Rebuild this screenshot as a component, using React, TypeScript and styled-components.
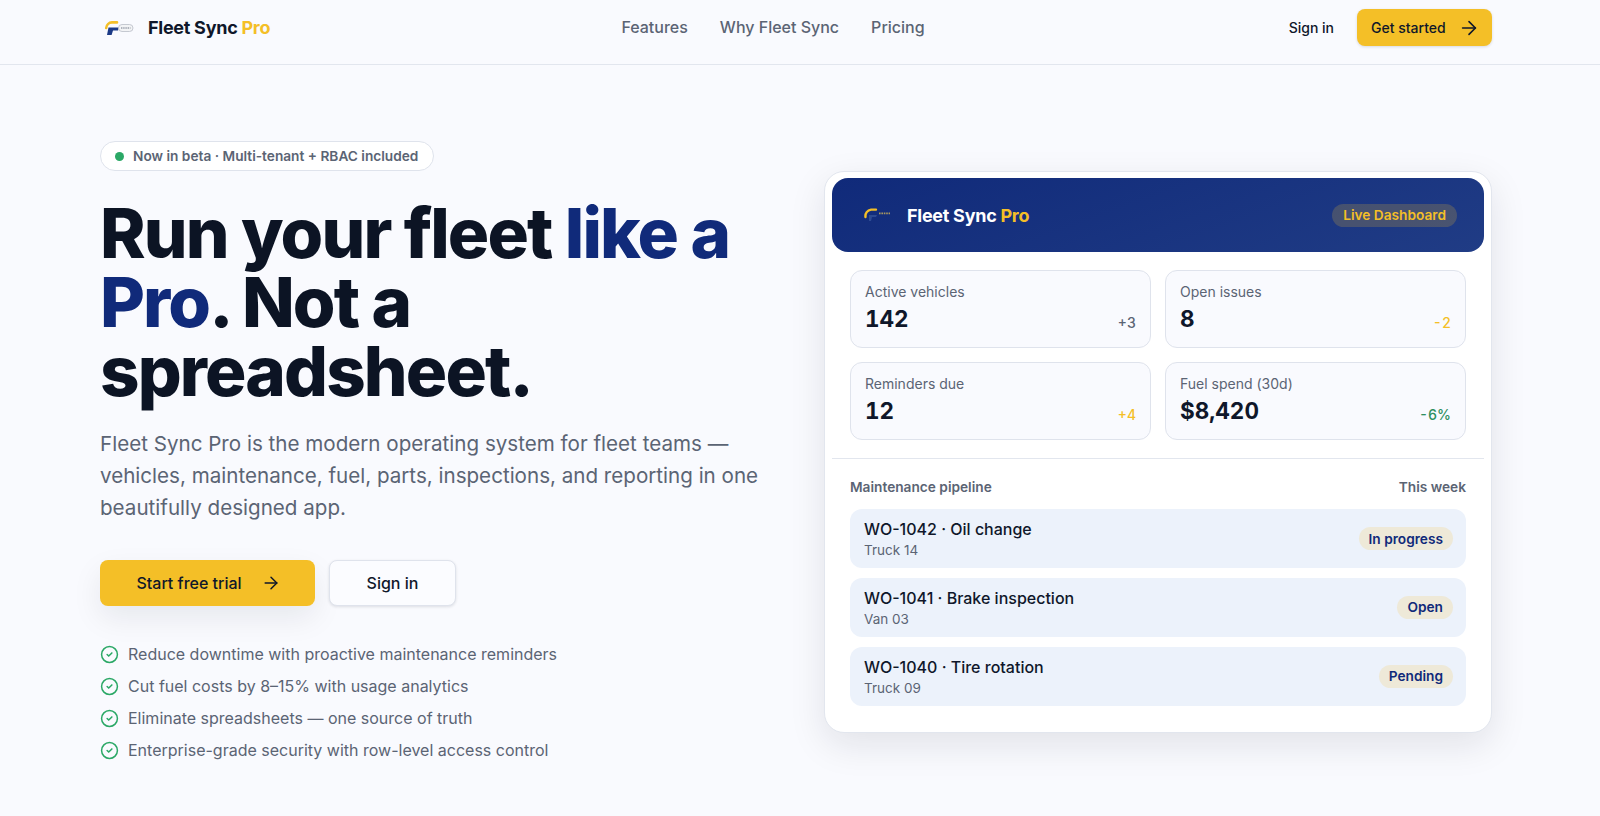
import React from 'react';
import styled, { createGlobalStyle } from 'styled-components';
import { ArrowRight, CircleCheck } from 'lucide-react';

const GlobalStyle = createGlobalStyle`
  html, body {
    margin: 0;
    background: #f9fafe;
    font-family: Inter, "Noto Sans", sans-serif;
    color: #0f172a;
    overflow: hidden;
  }
  * { box-sizing: border-box; }
`;

const Page = styled.div`
  width: 1600px;
  height: 816px;
  background: #f9fafe;
`;

const Header = styled.header`
  height: 65px;
  padding: 0 108px 9px 100px;
  display: grid;
  grid-template-columns: 1fr auto 1fr;
  align-items: center;
  border-bottom: 1px solid #e2e6ee;
`;

const Brand = styled.div<{ $light?: boolean }>`
  display: flex;
  align-items: center;
  gap: ${(p) => (p.$light ? '15px' : '8px')};
  font-size: 18px;
  font-weight: 700;
  letter-spacing: -0.015em;
  color: ${(p) => (p.$light ? '#ffffff' : '#0f172a')};
  white-space: nowrap;
`;

const Accent = styled.span`
  color: #f4bf27;
`;

const Nav = styled.nav`
  display: flex;
  gap: 32px;
  margin: 0 46px 1px 0;
`;

const NavLink = styled.a`
  font-size: 16px;
  font-weight: 500;
  color: #5b6474;
`;

const HeaderActions = styled.div`
  display: flex;
  justify-content: flex-end;
  align-items: center;
  gap: 23px;
`;

const SignIn = styled.a`
  font-size: 14px;
  font-weight: 500;
  color: #0f172a;
`;

const GetStarted = styled.a`
  height: 37px;
  width: 135px;
  padding: 0 12px 0 14px;
  display: flex;
  align-items: center;
  justify-content: space-between;
  background: #f4bf27;
  border-radius: 8px;
  font-size: 14px;
  font-weight: 500;
  color: #0f172a;
  box-shadow: 0 1px 3px rgba(15, 23, 42, 0.14);
`;

const Hero = styled.main`
  padding: 76px 108px 0 100px;
  display: grid;
  grid-template-columns: 660px 668px;
  column-gap: 64px;
  align-items: start;
`;

const Left = styled.section`
  display: flex;
  flex-direction: column;
  align-items: flex-start;
`;

const Pill = styled.div`
  height: 30px;
  padding: 0 15px 0 14px;
  display: flex;
  align-items: center;
  gap: 9px;
  background: #ffffff;
  border: 1px solid #dfe3ec;
  border-radius: 999px;
  font-size: 13.7px;
  font-weight: 600;
  color: #5b6474;
`;

const Dot = styled.span`
  width: 9px;
  height: 9px;
  border-radius: 50%;
  background: #2ba866;
`;

const Headline = styled.h1`
  margin: 28px 0 0;
  width: 660px;
  font-size: 69px;
  line-height: 69px;
  font-weight: 800;
  letter-spacing: -0.027em;
  color: #0c1424;
`;

const Highlight = styled.span`
  color: #102a7a;
`;

const Lead = styled.p`
  margin: 22px 0 0;
  width: 664px;
  font-size: 20.6px;
  line-height: 32px;
  color: #5b6474;
`;

const Cta = styled.div`
  margin-top: 36px;
  display: flex;
  gap: 14px;
`;

const PrimaryButton = styled.a`
  width: 215px;
  height: 46px;
  padding-left: 2px;
  display: flex;
  align-items: center;
  justify-content: center;
  gap: 19px;
  background: #f4bf27;
  border-radius: 8px;
  font-size: 16px;
  font-weight: 500;
  color: #0f172a;
  box-shadow: 0 12px 30px rgba(15, 23, 42, 0.08);
`;

const SecondaryButton = styled.a`
  width: 127px;
  height: 46px;
  display: flex;
  align-items: center;
  justify-content: center;
  background: #fbfcff;
  border: 1px solid #dfe3ec;
  border-radius: 8px;
  font-size: 16px;
  font-weight: 500;
  color: #0f172a;
  box-shadow: 0 1px 3px rgba(15, 23, 42, 0.12);
`;

const Benefits = styled.ul`
  list-style: none;
  margin: 36px 0 0;
  padding: 0;
  display: flex;
  flex-direction: column;
  gap: 8px;
`;

const Benefit = styled.li`
  display: flex;
  align-items: center;
  gap: 9px;
  height: 24px;
  font-size: 16px;
  color: #5b6474;
`;

const Card = styled.section`
  margin-top: 30px;
  height: 562px;
  padding: 6px 7px 7px;
  background: #ffffff;
  border: 1px solid #e2e6ee;
  border-radius: 20px;
  box-shadow: 0 12px 36px rgba(15, 23, 42, 0.1);
`;

const CardHeader = styled.div`
  height: 74px;
  padding: 0 27px 0 32px;
  display: flex;
  align-items: center;
  justify-content: space-between;
  background: linear-gradient(160deg, #102a7a, #203c85);
  border-radius: 16px;
`;

const LiveTag = styled.span`
  height: 23px;
  padding: 0 11px;
  display: flex;
  align-items: center;
  background: rgba(244, 191, 39, 0.2);
  border-radius: 999px;
  font-size: 13.7px;
  font-weight: 600;
  color: #f4bf27;
`;

const StatGrid = styled.div`
  padding: 18px;
  display: grid;
  grid-template-columns: 1fr 1fr;
  gap: 14px;
`;

const Stat = styled.div`
  height: 78px;
  padding: 12px 14px 0;
  background: #f9fafe;
  border: 1px solid #dfe3ec;
  border-radius: 12px;
`;

const StatLabel = styled.div`
  font-size: 14px;
  line-height: 18px;
  color: #5b6474;
`;

const StatRow = styled.div`
  margin-top: 2px;
  display: flex;
  align-items: flex-end;
  justify-content: space-between;
  font-variant-numeric: tabular-nums;
`;

const StatValue = styled.div`
  font-size: 22.5px;
  line-height: 32px;
  font-weight: 700;
  color: #0f172a;
`;

const StatDelta = styled.div<{ $tone: string }>`
  font-size: 14px;
  line-height: 24px;
  font-weight: 500;
  color: ${(p) => p.$tone};
`;

const Divider = styled.hr`
  margin: 0;
  border: 0;
  border-top: 1px solid #e2e6ee;
`;

const Pipeline = styled.div`
  padding: 19px 18px 0;
`;

const PipelineHead = styled.div`
  display: flex;
  justify-content: space-between;
  font-size: 13.7px;
  line-height: 18px;
  font-weight: 600;
  color: #5b6474;
`;

const Rows = styled.div`
  margin-top: 13px;
  display: flex;
  flex-direction: column;
  gap: 9.4px;
`;

const Row = styled.div`
  height: 59.4px;
  padding: 0 13px 0 14px;
  display: flex;
  align-items: center;
  justify-content: space-between;
  background: #ecf2fb;
  border-radius: 12px;
`;

const RowText = styled.div`
  padding-top: 2px;
`;

const RowTitle = styled.div`
  font-size: 16px;
  line-height: 21px;
  font-weight: 500;
  color: #0f172a;
`;

const RowSub = styled.div`
  font-size: 13.5px;
  line-height: 20px;
  color: #5b6474;
`;

const Status = styled.span`
  height: 23px;
  padding: 0 10px;
  display: flex;
  align-items: center;
  background: #eee9d8;
  border-radius: 999px;
  font-size: 13.7px;
  font-weight: 600;
  color: #102a7a;
`;

const Logo = ({ small }: { small?: boolean }) =>
  small ? (
    <svg width="28" height="16" viewBox="0 0 28 16" fill="none">
      <path d="M1.5 10A6.5 6.5 0 0 1 7 2.6h5" stroke="#f4bf27" strokeWidth="2.4" strokeLinecap="round" />
      <path d="M5 8h8l-1 2H8l-1 4H5z" fill="#2d4a92" />
      <path d="M15 6.4h11" stroke="#a89860" strokeWidth="1.6" strokeDasharray="1.6 .8" />
    </svg>
  ) : (
    <svg width="40" height="20" viewBox="0 0 40 20" fill="none">
      <path d="M6.2 10A6 6 0 0 1 12 4.4h5" stroke="#f4bf27" strokeWidth="2.6" strokeLinecap="round" />
      <path d="M8.5 9.5H19l-1 3h-5l-1.4 4.5H7z" fill="#1c3a86" />
      <rect x="18.5" y="6.5" width="14.5" height="7" rx="3.5" fill="#f2f3f5" stroke="#b9bdc6" strokeWidth="0.8" />
      <path d="M21 10h9.5" stroke="#6c7484" strokeWidth="1.2" strokeDasharray="1.4 .8" />
    </svg>
  );

const stats = [
  { label: 'Active vehicles', value: '142', delta: '+3', tone: '#5b6474' },
  { label: 'Open issues', value: '8', delta: '-2', tone: '#f4bf27' },
  { label: 'Reminders due', value: '12', delta: '+4', tone: '#f4bf27' },
  { label: 'Fuel spend (30d)', value: '$8,420', delta: '-6%', tone: '#2f8f5f' },
];

const orders = [
  { title: 'WO-1042 · Oil change', sub: 'Truck 14', status: 'In progress' },
  { title: 'WO-1041 · Brake inspection', sub: 'Van 03', status: 'Open' },
  { title: 'WO-1040 · Tire rotation', sub: 'Truck 09', status: 'Pending' },
];

const benefits = [
  'Reduce downtime with proactive maintenance reminders',
  'Cut fuel costs by 8–15% with usage analytics',
  'Eliminate spreadsheets — one source of truth',
  'Enterprise-grade security with row-level access control',
];

export default function App() {
  return (
    <Page>
      <GlobalStyle />
      <Header>
        <Brand>
          <Logo />
          <span>
            Fleet Sync <Accent>Pro</Accent>
          </span>
        </Brand>
        <Nav>
          <NavLink>Features</NavLink>
          <NavLink>Why Fleet Sync</NavLink>
          <NavLink>Pricing</NavLink>
        </Nav>
        <HeaderActions>
          <SignIn>Sign in</SignIn>
          <GetStarted>
            Get started
            <ArrowRight size={22} strokeWidth={1.75} />
          </GetStarted>
        </HeaderActions>
      </Header>
      <Hero>
        <Left>
          <Pill>
            <Dot />
            Now in beta · Multi-tenant + RBAC included
          </Pill>
          <Headline>
            Run your fleet <Highlight>like a Pro</Highlight>. Not a spreadsheet.
          </Headline>
          <Lead>
            Fleet Sync Pro is the modern operating system for fleet teams — vehicles, maintenance,
            fuel, parts, inspections, and reporting in one beautifully designed app.
          </Lead>
          <Cta>
            <PrimaryButton>
              Start free trial
              <ArrowRight size={20} strokeWidth={1.75} />
            </PrimaryButton>
            <SecondaryButton>Sign in</SecondaryButton>
          </Cta>
          <Benefits>
            {benefits.map((b) => (
              <Benefit key={b}>
                <CircleCheck size={19} color="#2ba866" strokeWidth={1.9} />
                {b}
              </Benefit>
            ))}
          </Benefits>
        </Left>
        <Card>
          <CardHeader>
            <Brand $light>
              <Logo small />
              <span>
                Fleet Sync <Accent>Pro</Accent>
              </span>
            </Brand>
            <LiveTag>Live Dashboard</LiveTag>
          </CardHeader>
          <StatGrid>
            {stats.map((s) => (
              <Stat key={s.label}>
                <StatLabel>{s.label}</StatLabel>
                <StatRow>
                  <StatValue>{s.value}</StatValue>
                  <StatDelta $tone={s.tone}>{s.delta}</StatDelta>
                </StatRow>
              </Stat>
            ))}
          </StatGrid>
          <Divider />
          <Pipeline>
            <PipelineHead>
              <span>Maintenance pipeline</span>
              <span>This week</span>
            </PipelineHead>
            <Rows>
              {orders.map((o) => (
                <Row key={o.title}>
                  <RowText>
                    <RowTitle>{o.title}</RowTitle>
                    <RowSub>{o.sub}</RowSub>
                  </RowText>
                  <Status>{o.status}</Status>
                </Row>
              ))}
            </Rows>
          </Pipeline>
        </Card>
      </Hero>
    </Page>
  );
}
